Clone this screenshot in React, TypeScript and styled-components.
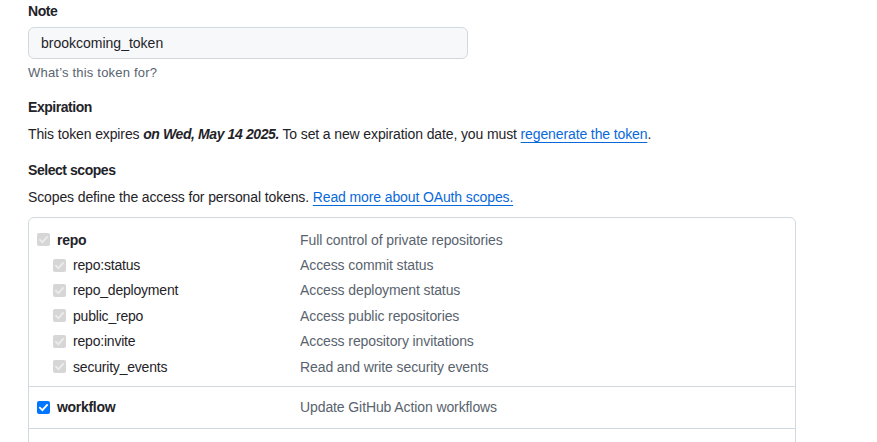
import React from "react";
import styled, { createGlobalStyle } from "styled-components";

const GlobalStyle = createGlobalStyle`
  html, body {
    margin: 0;
    padding: 0;
    background: #ffffff;
  }
  body {
    font-family: "Liberation Sans", Arial, sans-serif;
    color: #1f2328;
    font-size: 14px;
    line-height: 20px;
  }
`;

const Page = styled.div`
  padding: 1px 28px 0 28px;
  width: 768px;
  height: 441px;
  overflow: hidden;
`;

const Label = styled.div<{ $gap?: number }>`
  font-weight: 700;
  font-size: 14px;
  line-height: 20px;
  letter-spacing: -0.45px;
  margin-top: ${(p) => p.$gap ?? 0}px;
`;

const Input = styled.div`
  margin-top: 6px;
  box-sizing: border-box;
  width: 440px;
  height: 32px;
  border: 1px solid #d1d9e0;
  border-radius: 6px;
  background: #f6f8fa;
  padding: 0 12px;
  display: flex;
  align-items: center;
  font-size: 14px;
`;

const Note = styled.div`
  margin-top: 5px;
  font-size: 13px;
  line-height: 18px;
  color: #59636e;
  letter-spacing: 0.2px;
`;

const Para = styled.p`
  margin: 7px 0 0 0;
  font-size: 14px;
  line-height: 20px;
  letter-spacing: -0.12px;
`;

const Strong = styled.b`
  font-weight: 700;
  font-style: italic;
  letter-spacing: -0.4px;
`;

const Link = styled.a`
  color: #0969da;
  text-decoration: underline;
  text-underline-offset: 3px;
  text-decoration-thickness: 1px;
`;

const ScopeBox = styled.div`
  margin-top: 10px;
  border: 1px solid #d1d9e0;
  border-radius: 6px;
  height: 260px;
  box-sizing: border-box;
`;

const Group = styled.div<{ $pt: number; $pb: number }>`
  padding: ${(p) => p.$pt}px 0 ${(p) => p.$pb}px 0;
  border-bottom: 1px solid #d1d9e0;
`;

const Row = styled.div<{ $h: number }>`
  display: grid;
  grid-template-columns: 263px 1fr;
  height: ${(p) => p.$h}px;
  align-items: center;
  padding-left: 8px;
`;

const LabelCell = styled.div<{ $indent: boolean; $bold: boolean }>`
  display: flex;
  align-items: center;
  gap: 7px;
  padding-left: ${(p) => (p.$indent ? 16 : 0)}px;
  font-weight: ${(p) => (p.$bold ? 700 : 400)};
  letter-spacing: ${(p) => (p.$bold ? "-0.3px" : "-0.2px")};
  color: #1f2328;
`;

const Desc = styled.div`
  color: #59636e;
  letter-spacing: -0.1px;
`;

const Box = styled.span<{ $enabled: boolean }>`
  box-sizing: border-box;
  width: 13px;
  height: 13px;
  border-radius: 2px;
  background: ${(p) => (p.$enabled ? "#0075ff" : "#d6d6d6")};
  display: inline-flex;
  align-items: center;
  justify-content: center;
  flex: none;
`;

const Check = ({ enabled }: { enabled: boolean }) => (
  <Box $enabled={enabled}>
    <svg width="11" height="11" viewBox="0 0 11 11">
      <polyline
        points="2,5.8 4.4,8.2 9,3"
        fill="none"
        stroke={enabled ? "#ffffff" : "#ececec"}
        strokeWidth="1.9"
        strokeLinecap="square"
      />
    </svg>
  </Box>
);

type Scope = { name: string; desc: string; sub?: boolean; enabled?: boolean };

const repoScopes: Scope[] = [
  { name: "repo", desc: "Full control of private repositories" },
  { name: "repo:status", desc: "Access commit status", sub: true },
  { name: "repo_deployment", desc: "Access deployment status", sub: true },
  { name: "public_repo", desc: "Access public repositories", sub: true },
  { name: "repo:invite", desc: "Access repository invitations", sub: true },
  { name: "security_events", desc: "Read and write security events", sub: true },
];

const ScopeRow = ({ s, h }: { s: Scope; h: number }) => (
  <Row $h={h}>
    <LabelCell $indent={!!s.sub} $bold={!s.sub}>
      <Check enabled={!!s.enabled} />
      {s.name}
    </LabelCell>
    <Desc>{s.desc}</Desc>
  </Row>
);

export default function App() {
  return (
    <>
      <GlobalStyle />
      <Page>
        <Label>Note</Label>
        <Input>brookcoming_token</Input>
        <Note>What’s this token for?</Note>

        <Label $gap={15}>Expiration</Label>
        <Para>
          This token expires <Strong>on Wed, May 14 2025.</Strong> To set a new expiration date, you must{" "}
          <Link href="#">regenerate the token</Link>.
        </Para>

        <Label $gap={16}>Select scopes</Label>
        <Para>
          Scopes define the access for personal tokens.{" "}
          <Link href="#">Read more about OAuth scopes.</Link>
        </Para>

        <ScopeBox>
          <Group $pt={9} $pb={6.6}>
            {repoScopes.map((s) => (
              <ScopeRow key={s.name} s={s} h={25.4} />
            ))}
          </Group>
          <Group $pt={10} $pb={10}>
            <ScopeRow s={{ name: "workflow", desc: "Update GitHub Action workflows", enabled: true }} h={21} />
          </Group>
        </ScopeBox>
      </Page>
    </>
  );
}
